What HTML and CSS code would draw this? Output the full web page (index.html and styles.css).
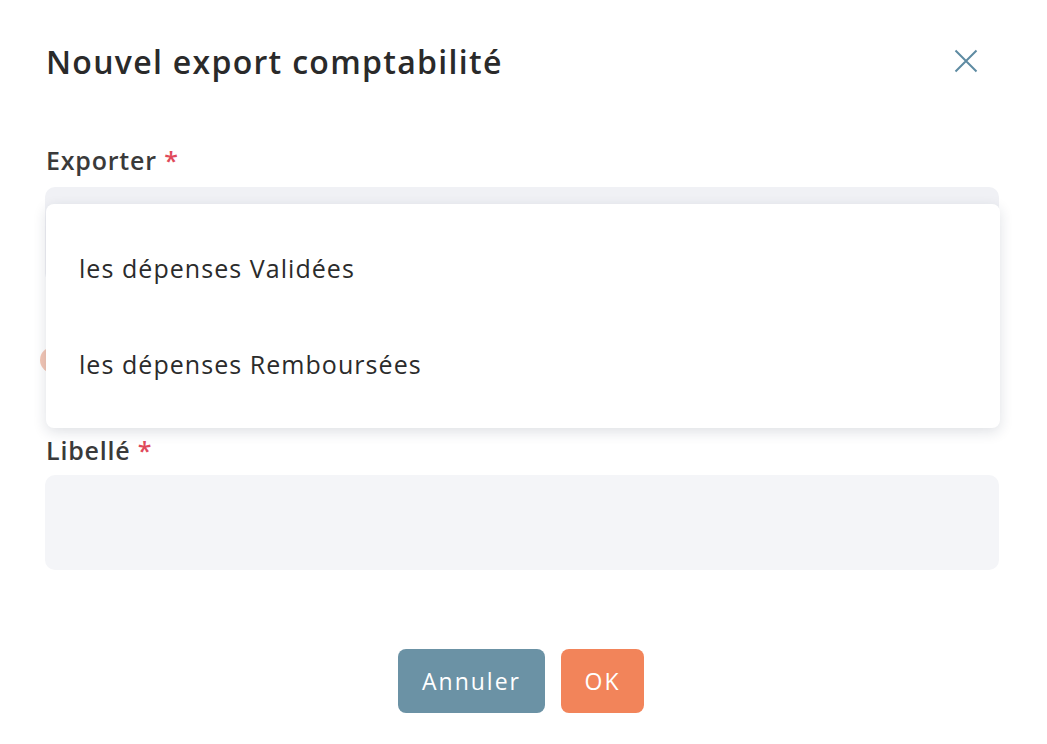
FILE: index.html
```html
<!DOCTYPE html>
<html>
<head>
    <title>Nouvel export comptabilité</title>
    <link rel="stylesheet" href="styles.css">
</head>
<body>
    <div class="modal">
        <div class="modal-header">
            <h1>Nouvel export comptabilité</h1>
            <button class="close-btn" aria-label="Fermer">
                <svg width="24" height="24" viewBox="0 0 24 24">
                    <path d="M1.5 1.5 L22.5 22.5 M22.5 1.5 L1.5 22.5" stroke="#5e8ba2" stroke-width="2" fill="none"/>
                </svg>
            </button>
        </div>

        <div class="field">
            <label>Exporter <span class="required">*</span></label>
            <div class="select-wrap">
                <div class="select-box"></div>
                <div class="radio-row">
                    <span class="radio"></span>
                </div>
                <ul class="dropdown">
                    <li>les dépenses Validées</li>
                    <li>les dépenses Remboursées</li>
                </ul>
            </div>
        </div>

        <div class="field">
            <label>Libellé <span class="required">*</span></label>
            <div class="text-box"></div>
        </div>

        <div class="actions">
            <button class="btn btn-cancel">Annuler</button>
            <button class="btn btn-ok">OK</button>
        </div>
    </div>
</body>
</html>
```

FILE: styles.css
```css
body {
    margin: 0;
    font-family: "Open Sans", "Noto Sans", sans-serif;
    background-color: #fff;
    color: #2b2b2b;
}

.modal {
    width: 954px;
    padding: 36px 47px 0 45px;
}

.modal-header {
    display: flex;
    justify-content: space-between;
    align-items: center;
    height: 50px;
}

.modal-header h1 {
    margin: 0 0 0 1px;
    font-size: 32px;
    font-weight: 600;
    letter-spacing: 1.3px;
    color: #2a2a2a;
}

.close-btn {
    background: none;
    border: none;
    padding: 0;
    margin-right: 21px;
    cursor: pointer;
    display: flex;
}

.field {
    margin-top: 57px;
}

.field + .field {
    margin-top: 0;
}

.field label {
    display: block;
    font-size: 25px;
    font-weight: 600;
    letter-spacing: 0.8px;
    color: #3a3a3a;
    margin-left: 1px;
    height: 34px;
    line-height: 34px;
}

.required {
    color: #e04a5b;
}

.select-wrap {
    position: relative;
    margin-top: 10px;
    height: 246px;
}

.select-box {
    height: 96px;
    background-color: #f0f1f5;
    border-radius: 10px;
}

.radio-row {
    padding-top: 64px;
}

.radio {
    display: block;
    width: 26px;
    height: 26px;
    margin-left: -5px;
    border-radius: 50%;
    background-color: #f3c6b5;
}

.dropdown {
    position: absolute;
    top: 17px;
    left: 1px;
    right: -1px;
    margin: 0;
    padding: 16px 0;
    list-style: none;
    background-color: #fff;
    border-radius: 8px;
    box-shadow: 0 4px 14px rgba(30, 40, 70, 0.14);
}

.dropdown li {
    height: 96px;
    line-height: 96px;
    padding-left: 33px;
    font-size: 25px;
    letter-spacing: 1.05px;
    color: #2b2b2b;
}

.text-box {
    margin-top: 8px;
    height: 95px;
    background-color: #f4f5f8;
    border-radius: 10px;
}

.actions {
    display: flex;
    justify-content: center;
    gap: 16px;
    margin-top: 79px;
    padding-right: 2px;
}

.btn {
    height: 64px;
    border: none;
    border-radius: 8px;
    color: #fff;
    font-family: inherit;
    font-size: 23px;
    font-weight: 500;
    letter-spacing: 2px;
    cursor: pointer;
}

.btn-cancel {
    width: 147px;
    background-color: #6b92a5;
}

.btn-ok {
    width: 83px;
    background-color: #f2845a;
}
```
